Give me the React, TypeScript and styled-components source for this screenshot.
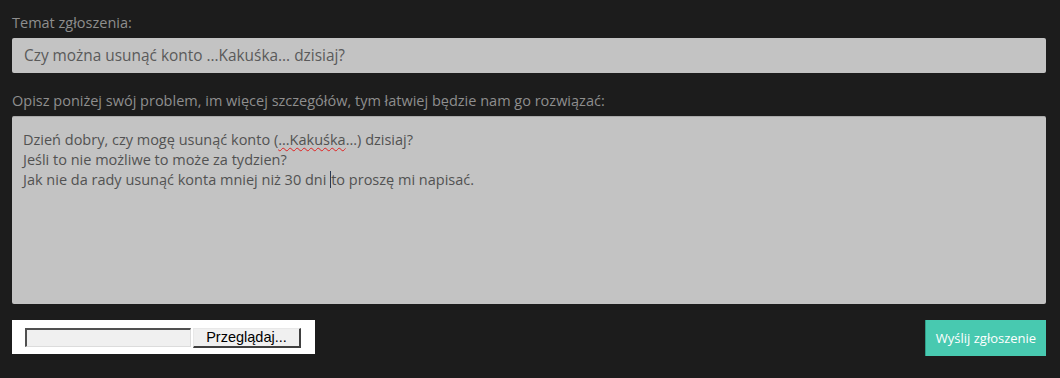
import React from "react";
import styled, { createGlobalStyle } from "styled-components";

const Global = createGlobalStyle`
  html, body { margin: 0; padding: 0; background: #1c1c1c; }
  body { font-family: "Open Sans", "Noto Sans", sans-serif; }
`;

const Page = styled.div`
  padding: 13px 14px 0 12px;
  display: flex;
  flex-direction: column;
`;

const Label = styled.div`
  font-size: 14.5px;
  line-height: 20px;
  color: #8e8e8e;
  margin-bottom: 5px;
`;

const TextInput = styled.div`
  height: 35px;
  box-sizing: border-box;
  background: #c3c3c3;
  border-radius: 2px;
  padding: 0 12px;
  display: flex;
  align-items: center;
  font-size: 15.4px;
  color: #5a5a5a;
  margin-bottom: 18px;
`;

const TextArea = styled.div`
  height: 188px;
  box-sizing: border-box;
  background: #c3c3c3;
  border-radius: 2px;
  border-top: 1px solid #a9a9a9;
  padding: 13px 11px;
  font-size: 14.5px;
  line-height: 20px;
  color: #525252;
`;

const Misspelled = styled.span`
  text-decoration: underline wavy #e02020;
  text-decoration-thickness: 1px;
  text-underline-offset: 2px;
`;

const Caret = styled.span`
  display: inline-block;
  width: 0;
  height: 17px;
  border-left: 1px solid #2a3a55;
  vertical-align: -3px;
`;

const BottomRow = styled.div`
  margin-top: 16px;
  display: flex;
  justify-content: space-between;
  align-items: flex-start;
`;

const FilePanel = styled.div`
  width: 303px;
  height: 34px;
  box-sizing: border-box;
  background: #ffffff;
  padding: 8px 0 0 13px;
  display: flex;
  align-items: flex-start;
  gap: 2px;
`;

const FileField = styled.div`
  width: 166px;
  height: 19px;
  box-sizing: border-box;
  background: #f0f0f0;
  border-top: 2px solid #505050;
  border-left: 2px solid #505050;
  border-bottom: 1px solid #dcdcdc;
  border-right: 1px solid #dcdcdc;
`;

const BrowseButton = styled.div`
  width: 108px;
  height: 20px;
  box-sizing: border-box;
  background: #f0f0f0;
  border-top: 1px solid #e8e8e8;
  border-left: 1px solid #e8e8e8;
  border-right: 2px solid #404040;
  border-bottom: 2px solid #404040;
  font-family: "Liberation Sans", Arial, sans-serif;
  font-size: 14.5px;
  line-height: 16px;
  color: #000;
  text-align: center;
`;

const SendButton = styled.div`
  width: 121px;
  height: 36px;
  box-sizing: border-box;
  background: #48c9b0;
  border-left: 1px solid #2f9e88;
  color: #ffffff;
  font-size: 13px;
  display: flex;
  align-items: center;
  justify-content: center;
`;

export default function App() {
  return (
    <>
      <Global />
      <Page>
        <Label>Temat zgłoszenia:</Label>
        <TextInput>Czy można usunąć konto ...Kakuśka... dzisiaj?</TextInput>
        <Label>Opisz poniżej swój problem, im więcej szczegółów, tym łatwiej będzie nam go rozwiązać:</Label>
        <TextArea>
          Dzień dobry, czy mogę usunąć konto (<Misspelled>...Kakuśka</Misspelled>...) dzisiaj?
          <br />
          Jeśli to nie możliwe to może za tydzien?
          <br />
          Jak nie da rady usunąć konta mniej niż 30 dni <Caret />to proszę mi napisać.
        </TextArea>
        <BottomRow>
          <FilePanel>
            <FileField />
            <BrowseButton>Przeglądaj...</BrowseButton>
          </FilePanel>
          <SendButton>Wyślij zgłoszenie</SendButton>
        </BottomRow>
      </Page>
    </>
  );
}
